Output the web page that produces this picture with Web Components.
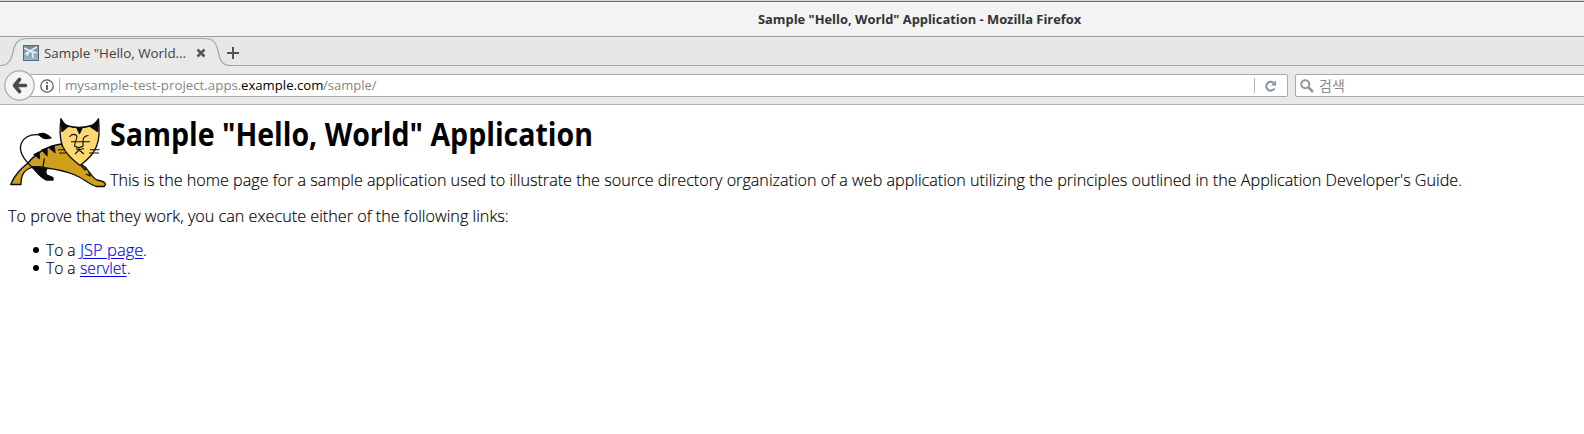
<!DOCTYPE html>
<html lang="ko"><head><meta charset="utf-8"><title>Sample "Hello, World" Application</title>
<style>body{margin:0;background:#fff;overflow:hidden}</style></head><body><browser-window></browser-window>
<script>
const define=(name,html,after)=>customElements.define(name,class extends HTMLElement{
  constructor(){super();this.attachShadow({mode:'open'}).innerHTML=html;}
  connectedCallback(){if(after)after(this);}
});
// Text run squeezed or stretched to a given width
define('fit-text','<style>:host{display:block;flex:none;white-space:pre}span{display:inline-block;transform-origin:0 50%;text-decoration:inherit}</style><span><slot></slot></span>',el=>{
  const w=+el.getAttribute('w');el.style.width=w+'px';
  const s=el.shadowRoot.querySelector('span');s.style.transform='scaleX('+w/s.offsetWidth+')';
});
define('title-bar',`<style>:host{display:flex;height:37px;box-sizing:border-box;border-top:1px solid #d6d6d4;border-bottom:1px solid #9d9f9a;background:#f3f3f3;padding-left:758px;font:700 13px/36px "Open Sans",sans-serif;color:#2e3436;box-shadow:inset 0 1px #6b6b68}</style><fit-text w="323">Sample "Hello, World" Application - Mozilla Firefox</fit-text>`);
define('tab-strip',`<style>:host{display:block;height:29px;background:#e7e7e5;position:relative;font:400 13px/30px "Open Sans",sans-serif;color:#3c4144}.bg{position:absolute;left:0;top:0}.row{position:relative;display:flex;align-items:center;padding-left:23px;height:31px}fit-text{margin-left:5px}.x{margin-left:10px}.p{margin-left:21px}</style>
<svg class="bg" width="1584" height="29"><path d="M0 28.500C9 28.500 11 23 13 15C15 5 19 1.500 28 1.500H204C213 1.500 216 5 218 14C220 23 222 28.500 230 28.500H1584V29H0Z" fill="#e9e9e8"/><path d="M0 28.500C9 28.500 11 23 13 15C15 5 19 1.500 28 1.500H204C213 1.500 216 5 218 14C220 23 222 28.500 230 28.500H1584" fill="none" stroke="#a0a6aa" stroke-width="1.200"/></svg>
<div class="row"><svg width="16" height="16"><defs><linearGradient id="g" x2="0" y2="1"><stop stop-color="#6d8898"/><stop offset="1" stop-color="#9dbdd0"/></linearGradient></defs><rect width="16" height="16" fill="url(#g)"/><path d="M1 3L7 6L14 2M7 6L2 9M7 6C10 7 10 9 10 13M7 6L14 8M6 7L4 11" stroke="#e7eef1" stroke-width="1.600" fill="none"/><path d="M0 .5H16M.5 0V16M15.500 0V16M0 15.500H16" stroke="#52697a"/></svg><fit-text w="142">Sample "Hello, World...</fit-text><svg class="x" width="10" height="10"><path d="M1.500 1.500L8.500 8.500M8.500 1.500L1.500 8.500" stroke="#555" stroke-width="2.500"/></svg><svg class="p" width="12" height="12"><path d="M6 0V12M0 6H12" stroke="#555" stroke-width="2"/></svg></div>`);
define('nav-bar',`<style>:host{display:flex;height:39px;box-sizing:border-box;border-bottom:1px solid #b3b3b1;background:#e9e9e8;padding-top:8px;position:relative;font:400 13px/22px "Open Sans",sans-serif}.url,.search{box-sizing:border-box;height:23px;border:1px solid #a9a9a7;background:#fff;display:flex;align-items:center;border-radius:2px;flex:none}.url{margin-left:20px;width:1268px;padding-left:19px}fit-text{margin-top:-2px}.back{position:absolute;left:4px;top:4px}.s{width:1px;height:15px;background:#b5b5b5;margin:0 5px 0 5px}.g{color:#858585}.d{color:#000}.r{margin-left:auto;display:flex;align-items:center;gap:10px;margin-right:10px}.r i{width:1px;height:15px;background:#b5b5b5}.search{margin-left:7px;width:300px;padding-left:4px;color:#8b8b8b;font:14px/22px "Noto Sans CJK KR",sans-serif;gap:5px}</style>
<div class="url"><svg width="14" height="14"><circle cx="7" cy="7" r="6.200" fill="none" stroke="#555" stroke-width="1.200"/><path d="M7 3V4.700M7 6V11" stroke="#555" stroke-width="1.800"/></svg><div class="s"></div><fit-text class="g" w="176">mysample-test-project.apps.</fit-text><fit-text class="d" w="82">example.com</fit-text><fit-text class="g" w="54">/sample/</fit-text><div class="r"><i></i><svg width="12" height="12"><path d="M9.500 8.500A4.400 4.400 0 1 1 8.500 2.800" fill="none" stroke="#8494a2" stroke-width="2"/><path d="M11 .5V5.500H6Z" fill="#8494a2"/></svg></div></div>
<svg class="back" width="31" height="31"><circle cx="15.500" cy="15.500" r="14.700" fill="#f5f5f4" stroke="#a9a9a7" stroke-width="1.200"/><path d="M15.500 9.500L10.500 15.500L15.500 21.500M11 15.500H21.500" stroke="#4b4b4b" stroke-width="3.600" stroke-linecap="round" stroke-linejoin="round" fill="none"/></svg>
<div class="search"><svg width="14" height="14"><circle cx="5.300" cy="5.300" r="4" fill="none" stroke="#969696" stroke-width="2"/><path d="M8.500 8.500L13 13" stroke="#969696" stroke-width="2.600"/></svg><fit-text w="26">검색</fit-text></div>`);
define('tomcat-logo',`<style>:host{display:block;width:102px;flex:none}svg{display:block}</style><svg width="102" height="80" viewBox="8 110 102 80"><g stroke="#0b0b0b" stroke-width="1.300" stroke-linejoin="round">
<path d="M10.700 184.500C15 174 21 169 28 163C37 152 48 146 61 144L73 158L85 167C90 172 92 178 97 180C101 181 105 181 105.500 184.500L104 186.500H96C88 183 82 178 75 175C63 170 55 169 46 168Q39 166 33 167C23 170 21 176 21 184.500Z" fill="#d0a01c"/>
<path d="M32 167L47 168.500C45 172 46 174 47 175L53 177.500V180H46.500C42 179 38 174 32 167Z" fill="#0b0b0b"/><path d="M43 168Q43.500 163 44.300 158.500" fill="none"/>
<path d="M33 168C24 160 18 151 21.500 143C25 135.500 33 134 41 135" fill="none"/><path d="M38.500 134Q45 131.500 51 138Q43 140.500 38.500 134Z"/>
<path d="M34 154.500L39.500 158.500L39 152ZM42 150L47 155.500L47 148ZM49 147.500L55 152.500L54 145.500Z" fill="#0b0b0b"/>
<path d="M61 119Q64 125 68 126Q79 129 90 126Q95 125 98.500 119C99.500 129 100 137 97 145Q94 155 80 165.500Q67 156 62.500 146C59 137 59.500 129 61 119Z" fill="#ffd876"/>
<path d="M61 119Q64 125 68.500 126L62 131.500ZM98.500 119Q95 125 89.500 126L97.500 131.500ZM77 128L79.500 133.500L82 128Z" fill="#0b0b0b"/>
<path d="M69.500 137Q72 133 76 135Q78 137 75.500 141L74.500 146Q79 149 83 146V141Q83 136 88.500 135.500M71 141.800H90M79 147V150M75 154L79 150L84 154M76 148.500L79 150L84 148.500" fill="none" stroke-width="1.100"/><path d="M58 149.700H65M59 153H66M90 149.700H99.500M89 153H99" stroke-width="1.100"/><path d="M81 165.500L85 170L86.500 167.500M86 174L90 176L89 172" fill="none"/></g></svg>`);
define('sample-page',`<style>:host{display:block;padding:5px 8px;font:300 16px/18px "Open Sans",sans-serif;color:#000}fit-text{-webkit-text-stroke:.15px}.top{display:flex}h1{font:700 33px/38px "Open Sans",sans-serif;margin:5px 0 0 0;color:#000}h1 fit-text{-webkit-text-stroke:0}.p{margin-top:18px}.two{margin-top:17px}ul{margin:16px 0 0;padding:0;list-style:none}li{display:flex;align-items:center;height:18px;padding-left:25px}li:before{content:"";width:6px;height:6px;border-radius:50%;background:#000;margin-right:7px}a{color:#0000ee;text-decoration:underline;text-underline-offset:2px;display:block}</style>
<div class="top"><tomcat-logo></tomcat-logo><div><h1><fit-text w="483">Sample "Hello, World" Application</fit-text></h1><fit-text class="p" w="1352">This is the home page for a sample application used to illustrate the source directory organization of a web application utilizing the principles outlined in the Application Developer's Guide.</fit-text></div></div>
<fit-text class="two" w="501">To prove that they work, you can execute either of the following links:</fit-text>
<ul><li><fit-text w="34">To a </fit-text><a><fit-text w="63" style="text-decoration:underline">JSP page</fit-text></a><fit-text w="4">.</fit-text></li><li><fit-text w="34">To a </fit-text><a><fit-text w="47" style="text-decoration:underline">servlet</fit-text></a><fit-text w="4">.</fit-text></li></ul>`);
define('browser-window','<style>:host{display:block;height:434px;overflow:hidden;background:#fff}</style><title-bar></title-bar><tab-strip></tab-strip><nav-bar></nav-bar><sample-page></sample-page>');
</script></body></html>
